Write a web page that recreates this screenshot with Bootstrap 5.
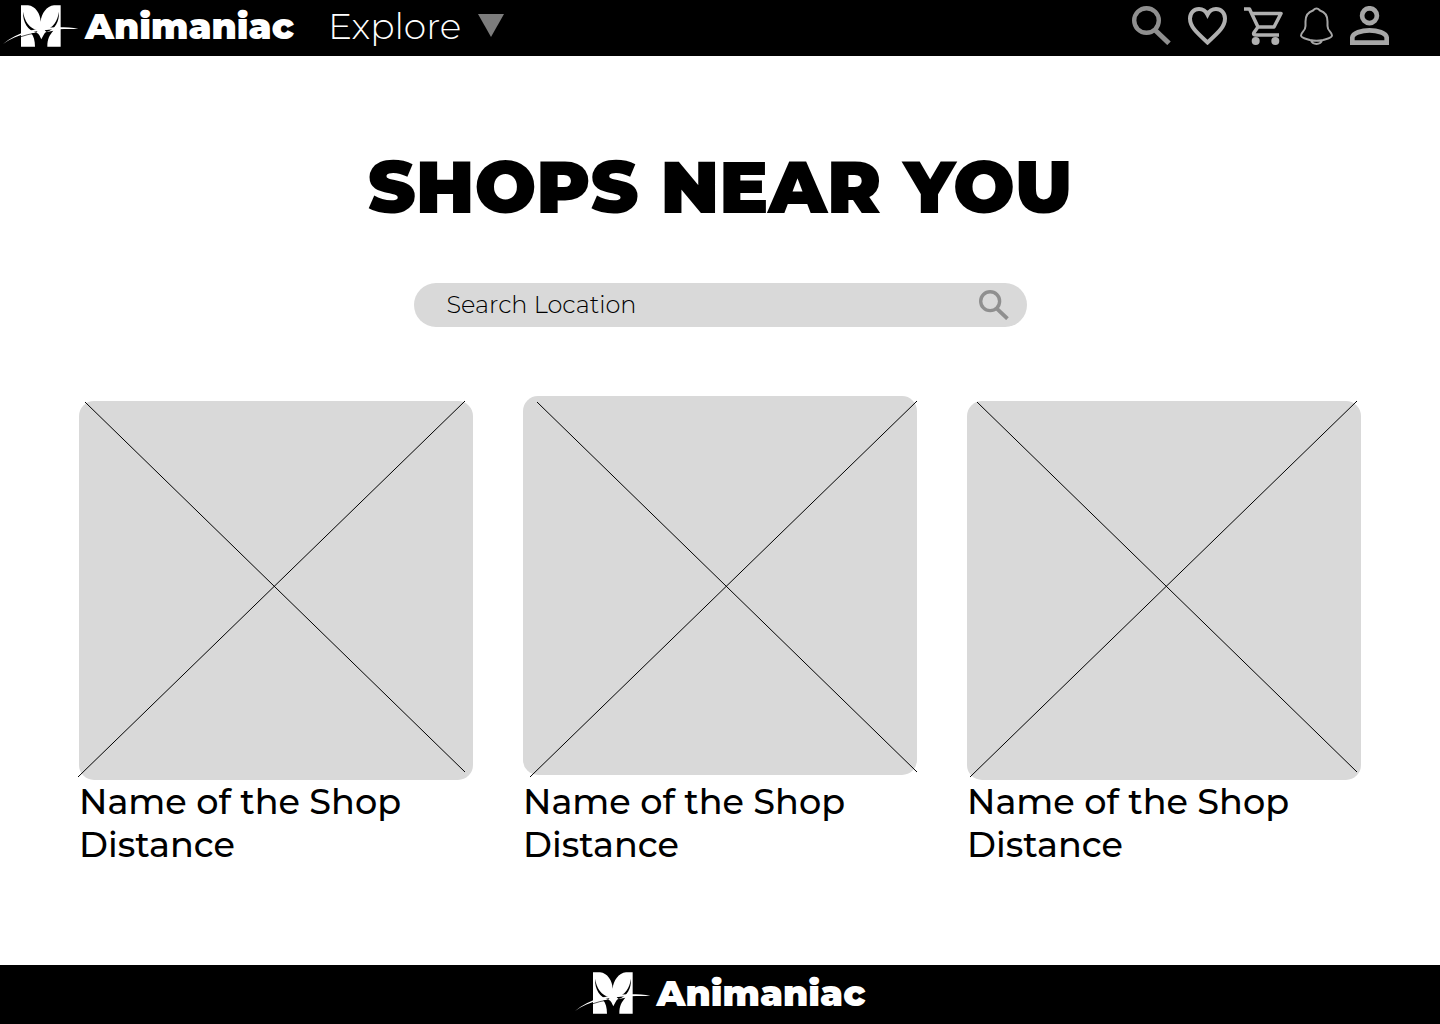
<!DOCTYPE html>
<html lang="en">
<head>
<meta charset="utf-8">
<meta name="viewport" content="width=device-width, initial-scale=1">
<title>Animaniac – Shops near you</title>
<link href="https://cdn.jsdelivr.net/npm/bootstrap@5.3.0/dist/css/bootstrap.min.css" rel="stylesheet">
<style>
  body { font-family: Montserrat, Inter, "Open Sans", sans-serif; color: #000; background: #fff; }
  .site-bar { background: #000; height: 56px; padding: 0 51px 5px 3px; }
  .site-foot { background: #000; height: 59px; padding-bottom: 3px; }
  .brand-link { color: #fff; font-weight: 900; font-size: 36px; line-height: 44px; text-decoration: none; gap: 6px; }
  .brand-logo { width: 76px; height: 44px; }
  .explore-btn { color: #fff; font-weight: 300; font-size: 36px; line-height: 44px; gap: 17px; margin-left: 34px; }
  .explore-btn:hover { color: #fff; }
  .icon-row { gap: 17px; }
  .icon-row a { display: block; line-height: 0; color: #a6a6a6; }
  .icon-row .lens-link, .lens-btn { color: #8f8f8f; }
  .page-title { font-weight: 900; font-size: 73px; line-height: 88px; margin: 87px 0 52px; }
  .search-box { width: 613px; max-width: 100%; height: 44px; border-radius: 22px; background: #d9d9d9; padding: 0 18px 0 33px; }
  .search-box input { font-weight: 300; font-size: 24px; line-height: 32px; color: #000; outline: 0; }
  .search-box input::placeholder { color: #000; opacity: 1; }
  .shop-area { padding: 69px 79px 0; }
  .shop-area .row { --bs-gutter-x: 50px; }
  .shop-thumb { display: block; width: 100%; overflow: visible; margin-top: 5px; }
  .shop-raised { margin: 0 0 5px; }
  .shop-text { font-weight: 500; font-size: 35px; line-height: 43px; }
</style>
</head>
<body class="d-flex flex-column min-vh-100">
<svg width="0" height="0" class="position-absolute" aria-hidden="true">
  <symbol id="logo" viewBox="9 11 228 132">
    <path fill="#fff" d="M63 15H84C106 17 121 40 122 64C124 40 140 17 162 15H182V139H142C142 114 149 104 160 91L137 96C133 98 129 108 124 117C120 108 117 100 110 97L94 99C101 108 105 121 105 139H63Z"/>
    <path fill="#000" d="M69 34C74 64 88 84 114 90L109 97C84 90 68 66 69 34ZM177 34C172 64 160 82 134 90L140 95C166 86 178 64 177 34Z"/>
    <path fill="#fff" d="M9 131C52 94 112 82 174 81C198 81 218 82 235 86C213 86 198 85 178 87C113 88 50 102 9 131Z"/>
    <path fill="none" stroke="#000" stroke-width="2" d="M63 109Q82 102 108 98"/>
  </symbol>
  <symbol id="lens" viewBox="0 0 39 39">
    <circle cx="14.500" cy="14.500" r="12.300" fill="none" stroke="currentColor" stroke-width="4.400"/>
    <path d="M23.500 24.500L37 37.300" fill="none" stroke="currentColor" stroke-width="5"/>
  </symbol>
</svg>

<nav class="site-bar d-flex align-items-center justify-content-between" aria-label="Main">
  <div class="d-flex align-items-center">
    <a class="brand-link d-flex align-items-center" href="#"><svg class="brand-logo" aria-hidden="true"><use href="#logo"/></svg><span>Animaniac</span></a>
    <button class="explore-btn btn p-0 border-0 d-flex align-items-center" type="button">Explore
      <svg width="26" height="23" viewBox="0 0 26 23" aria-hidden="true"><path fill="#7c7c7c" d="M0 0H26L13 23Z"/></svg>
    </button>
  </div>
  <div class="icon-row d-flex align-items-center">
    <a class="lens-link" href="#" aria-label="Search"><svg width="39" height="39"><use href="#lens"/></svg></a>
    <a href="#" aria-label="Favourites"><svg width="39" height="39" viewBox="0 0 39 39"><path fill="none" stroke="#b0b0b0" stroke-width="4" d="M19.500 36.500C8 26 2 20.500 2 12.500C2 7 6 3 11 3C15 3 18 5.500 19.500 8.500C21 5.500 24 3 28 3C33 3 37 7 37 12.500C37 20.500 31 26 19.500 36.500Z"/></svg></a>
    <a href="#" aria-label="Cart"><svg width="39" height="39" viewBox="0 0 39 39"><g fill="none" stroke="#b0b0b0" stroke-width="3.500" stroke-linejoin="round"><path d="M0 3H5.500L14 21H30L37 7.500H8M14 21L10 26.500C9 28.500 10 29 12 29H35"/></g><g fill="#b0b0b0"><circle cx="11.700" cy="35" r="4"/><circle cx="31.300" cy="35" r="4"/></g></svg></a>
    <a href="#" aria-label="Notifications"><svg width="33" height="39" viewBox="0 0 33 39"><path fill="none" stroke="#a6a6a6" stroke-width="2" d="M16.500 2.500C14.500 2.500 14 3.500 13 4.500C8 6 5.500 10 5.500 15.500V20C5.500 25.500 1 25.500 1 29.500C1 32 5 32.500 10 34C14 35 19 35 23 34C28 32.500 32 32 32 29.500C32 25.500 27.500 25.500 27.500 20V15.500C27.500 10 25 6 20 4.500C19 3.500 18.500 2.500 16.500 2.500ZM11 34.500C12.500 39 20.500 39 22 34.500"/></svg></a>
    <a href="#" aria-label="Account"><svg width="39" height="39" viewBox="0 0 39 39"><g fill="none" stroke="#a6a6a6" stroke-width="4.700"><circle cx="19.500" cy="9.700" r="7.400"/><path d="M2.300 36.700V32C2.300 27 12 24.300 19.500 24.300S36.700 27 36.700 32V36.700Z"/></g></svg></a>
  </div>
</nav>

<main class="flex-grow-1">
  <h1 class="page-title text-center">SHOPS NEAR YOU</h1>
  <form class="search-box mx-auto d-flex align-items-center" role="search">
    <input class="flex-grow-1 border-0 bg-transparent p-0" type="search" aria-label="Search Location" placeholder="Search Location">
    <button class="lens-btn btn border-0 p-0 d-flex" type="button" aria-label="Search"><svg width="30" height="30"><use href="#lens"/></svg></button>
  </form>
  <div class="shop-area">
    <div class="row row-cols-3">
      <div class="col">
        <svg class="shop-thumb" viewBox="0 0 394 379" role="img" aria-label="Shop picture"><rect width="394" height="379" rx="15" fill="#d9d9d9"/><path stroke="#000" d="M6 1L386 371M-1 376L386 0"/></svg>
        <div class="shop-text">Name of the Shop<br>Distance</div>
      </div>
      <div class="col">
        <svg class="shop-thumb shop-raised" viewBox="0 0 394 379" role="img" aria-label="Shop picture"><rect width="394" height="379" rx="15" fill="#d9d9d9"/><path stroke="#000" d="M14 6L394 376M7 381L394 5"/></svg>
        <div class="shop-text">Name of the Shop<br>Distance</div>
      </div>
      <div class="col">
        <svg class="shop-thumb" viewBox="0 0 394 379" role="img" aria-label="Shop picture"><rect width="394" height="379" rx="15" fill="#d9d9d9"/><path stroke="#000" d="M10 1L390 371M3 376L390 0"/></svg>
        <div class="shop-text">Name of the Shop<br>Distance</div>
      </div>
    </div>
  </div>
</main>

<footer class="site-foot d-flex align-items-center justify-content-center">
  <a class="brand-link d-flex align-items-center" href="#"><svg class="brand-logo" aria-hidden="true"><use href="#logo"/></svg><span>Animaniac</span></a>
</footer>
<script src="https://cdn.jsdelivr.net/npm/bootstrap@5.3.0/dist/js/bootstrap.bundle.min.js"></script>
</body>
</html>
